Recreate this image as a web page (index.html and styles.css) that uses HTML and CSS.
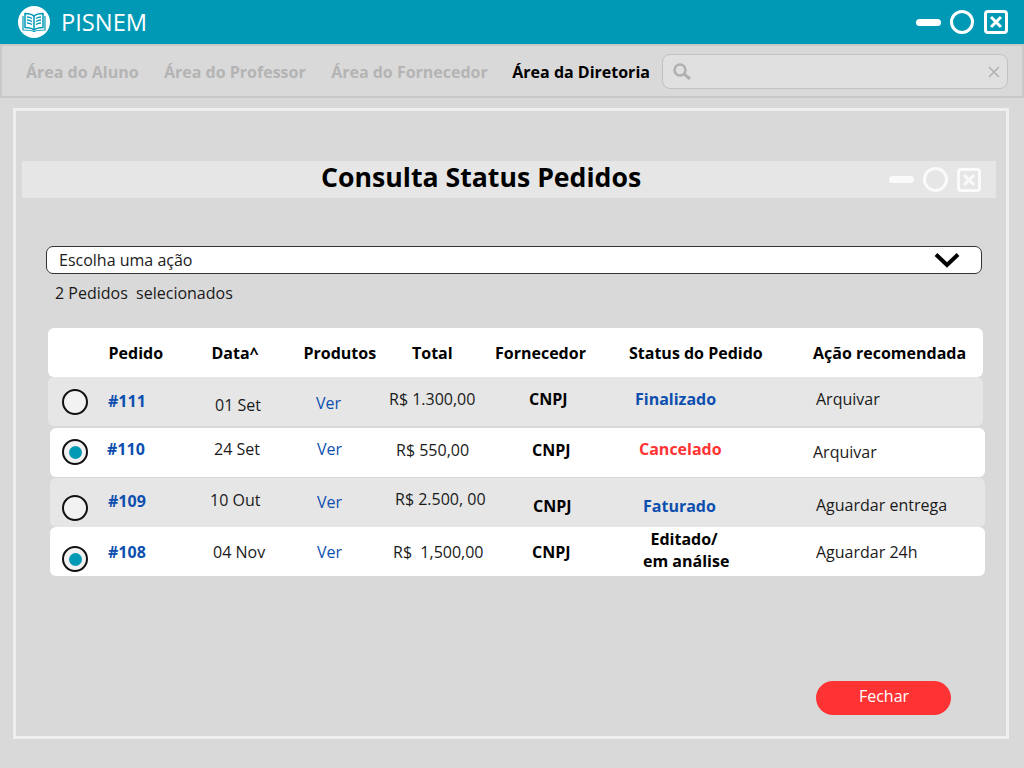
FILE: index.html
```html
<!DOCTYPE html>
<html lang="pt-BR">
<head>
    <meta charset="UTF-8">
    <meta name="viewport" content="width=device-width, initial-scale=1.0">
    <title>PISNEM - Consulta Status Pedidos</title>
    <link rel="stylesheet" href="styles.css">
</head>
<body>
    <!-- Top bar -->
    <header class="topbar">
        <span class="logo">
            <svg width="24" height="20" viewBox="0 0 24 20" fill="none" stroke="#0099b5" stroke-width="1.5">
                <path d="M12 4C9.500 2 6 1.500 3 1.500V15.500C6 15.500 9.500 16 12 18C14.500 16 18 15.500 21 15.500V1.500C18 1.500 14.500 2 12 4Z"/>
                <path d="M12 4V18"/>
                <path d="M1 4V18C5 18 9 18 12 19.500C15 18 19 18 23 18V4" stroke-width="1.200"/>
                <path d="M5 5C7 5 8.500 5.500 10 6.500M5 8C7 8 8.500 8.500 10 9.500M5 11C7 11 8.500 11.500 10 12.500M19 5C17 5 15.500 5.500 14 6.500M19 8C17 8 15.500 8.500 14 9.500M19 11C17 11 15.500 11.500 14 12.500" stroke-width="1.300"/>
            </svg>
        </span>
        <span class="brand">PISNEM</span>
        <div class="win-controls">
            <span class="win-min"></span>
            <span class="win-max"></span>
            <span class="win-close">
                <svg width="14" height="14" viewBox="0 0 14 14"><path d="M2 2L12 12M12 2L2 12" stroke="#fff" stroke-width="3"/></svg>
            </span>
        </div>
    </header>

    <!-- Nav -->
    <nav class="navbar">
        <a class="nav-link">Área do Aluno</a>
        <a class="nav-link">Área do Professor</a>
        <a class="nav-link">Área do Fornecedor</a>
        <a class="nav-link active">Área da Diretoria</a>
        <div class="search">
            <svg width="18" height="17" viewBox="0 0 18 17" fill="none" stroke="#b0b0b0">
                <circle cx="7" cy="7" r="5.500" stroke-width="2.500"/>
                <path d="M11 11L17 16" stroke-width="3"/>
            </svg>
            <svg class="search-clear" width="12" height="12" viewBox="0 0 12 12"><path d="M1 1L11 11M11 1L1 11" stroke="#b0b0b0" stroke-width="1.500"/></svg>
        </div>
    </nav>

    <!-- Consulta window -->
    <main class="panel">
        <div class="panel-title">
            <h1>Consulta Status Pedidos</h1>
            <div class="win-controls light">
                <span class="win-min"></span>
                <span class="win-max"></span>
                <span class="win-close">
                    <svg width="14" height="14" viewBox="0 0 14 14"><path d="M2 2L12 12M12 2L2 12" stroke="#fafafa" stroke-width="3"/></svg>
                </span>
            </div>
        </div>

        <div class="action-select">
            <span>Escolha uma ação</span>
            <svg width="26" height="16" viewBox="0 0 26 16" fill="none"><path d="M2 2.500L13 13L24 2.500" stroke="#000" stroke-width="4"/></svg>
        </div>
        <p class="selected-count">2 Pedidos  selecionados</p>

        <div class="orders">
            <div class="row head">
                <span></span>
                <span class="pedido">Pedido</span>
                <span class="data">Data^</span>
                <span class="produtos">Produtos</span>
                <span class="total">Total</span>
                <span class="fornecedor">Fornecedor</span>
                <span class="status">Status do Pedido</span>
                <span class="acao">Ação recomendada</span>
            </div>
            <div class="row r111 grey">
                <span class="radio"></span>
                <span class="pedido">#111</span>
                <span class="data">01 Set</span>
                <span class="produtos">Ver</span>
                <span class="total">R$ 1.300,00</span>
                <span class="fornecedor">CNPJ</span>
                <span class="status blue">Finalizado</span>
                <span class="acao">Arquivar</span>
            </div>
            <div class="row r110 shifted">
                <span class="radio on"></span>
                <span class="pedido">#110</span>
                <span class="data">24 Set</span>
                <span class="produtos">Ver</span>
                <span class="total">R$ 550,00</span>
                <span class="fornecedor">CNPJ</span>
                <span class="status red">Cancelado</span>
                <span class="acao">Arquivar</span>
            </div>
            <div class="row r109 shifted grey">
                <span class="radio"></span>
                <span class="pedido">#109</span>
                <span class="data">10 Out</span>
                <span class="produtos">Ver</span>
                <span class="total">R$ 2.500, 00</span>
                <span class="fornecedor">CNPJ</span>
                <span class="status blue">Faturado</span>
                <span class="acao">Aguardar entrega</span>
            </div>
            <div class="row r108 shifted">
                <span class="radio on"></span>
                <span class="pedido">#108</span>
                <span class="data">04 Nov</span>
                <span class="produtos">Ver</span>
                <span class="total">R$  1,500,00</span>
                <span class="fornecedor">CNPJ</span>
                <span class="status">Editado/ <br>em análise</span>
                <span class="acao">Aguardar 24h</span>
            </div>
        </div>

        <button class="btn-close" type="button">Fechar</button>
    </main>
</body>
</html>
```

FILE: styles.css
```css
* { box-sizing: border-box; }

body {
    margin: 0;
    height: 768px;
    overflow: hidden;
    background: #d9d9d9;
    color: #1a1a1a;
    font-family: "Open Sans", sans-serif;
    font-size: 16px;
    line-height: 22px;
}

/* top bar */
.topbar {
    display: flex;
    align-items: center;
    height: 44px;
    padding-left: 18px;
    background: #0099b5;
    color: #fff;
}
.logo {
    display: flex;
    align-items: center;
    justify-content: center;
    width: 32px;
    height: 32px;
    border-radius: 50%;
    background: #fff;
}
.brand {
    margin-left: 11px;
    font-size: 23.7px;
    line-height: 32px;
}
.win-controls {
    display: flex;
    align-items: center;
    margin-left: auto;
    padding-right: 16px;
}
.win-min {
    width: 25px;
    height: 7px;
    margin-right: 9px;
    border-radius: 4px;
    background: #fff;
}
.win-max {
    width: 24px;
    height: 24px;
    margin-right: 10px;
    border: 3px solid #fff;
    border-radius: 50%;
}
.win-close {
    display: flex;
    align-items: center;
    justify-content: center;
    width: 24px;
    height: 24px;
    border: 3px solid #fff;
    border-radius: 4px;
}

/* nav */
.navbar {
    display: flex;
    align-items: center;
    height: 54px;
    padding: 1px 14px 0 24px;
    border: 2px solid #c8c8c8;
    background: #d9d9d9;
}
.nav-link {
    margin-right: 25.4px;
    font-weight: 700;
    color: #b4b4b4;
}
.nav-link:nth-child(3) { margin-right: 24.5px; }
.nav-link.active {
    margin-right: 12px;
    color: #000;
}
.search {
    display: flex;
    align-items: center;
    flex: 1;
    height: 35px;
    padding: 0 7px 0 10px;
    border: 1px solid #c2c2c2;
    border-radius: 8px;
    background: #e0e0e0;
}
.search-clear { margin-left: auto; }

/* window */
.panel {
    position: relative;
    display: flex;
    flex-direction: column;
    width: 996px;
    height: 631px;
    margin: 10px 0 0 13px;
    padding: 50px 10px 0 6px;
    border: 3px solid #efefef;
}
.panel-title {
    display: flex;
    align-items: center;
    height: 37px;
    padding-left: 299px;
    background: #e6e6e6;
}
.panel-title h1 {
    margin: 0 0 5px;
    font-size: 26.67px;
    line-height: 32px;
    font-weight: 700;
    color: #000;
}
.win-controls.light {
    padding-right: 15px;
}
.light .win-max {
    width: 25px;
    height: 25px;
    margin-right: 9px;
}
.light .win-min,
.light .win-max,
.light .win-close { border-color: #fafafa; }
.light .win-min { background: #fafafa; }

.action-select {
    display: flex;
    align-items: center;
    justify-content: space-between;
    width: 936px;
    height: 28px;
    margin: 48px 0 0 24px;
    padding: 0 21px 0 12px;
    border: 1px solid #333;
    border-radius: 7px;
    background: #fff;
}
.selected-count {
    margin: 8px 0 0 33px;
    white-space: pre;
}

/* table */
.orders {
    width: 937px;
    margin: 24px 0 0 26px;
}
.row {
    display: grid;
    grid-template-columns: 58px 103px 94px 85px 106px 134px 184px 171px;
    align-items: start;
    width: 935px;
    height: 49px;
    border-radius: 6px;
    background: #fff;
    white-space: pre;
}
.row.shifted {
    grid-template-columns: 56px 103px 94px 85px 106px 134px 184px 171px;
    margin-left: 2px;
}
.row.grey { background: #e6e6e6; }
.r110 { margin-top: 2px; height: 49px; }
.r109 { margin-top: 1px; }

.head { font-weight: 700; color: #000; }
.head span { margin-top: 14px; }
.head .pedido, .head .data { margin-left: 2.5px; }
.head .produtos { margin-left: 0.5px; }
.head .fornecedor, .head .status, .head .acao { margin-left: 1px; }
.head .total { margin-left: 24px; }

.pedido { font-weight: 700; color: #0d4faf; }
.head .pedido { color: #000; }
.produtos { color: #0d4faf; }
.head .produtos { color: #000; }
.fornecedor { font-weight: 700; color: #000; }
.status { font-weight: 700; color: #000; }
.status.blue { color: #0d4faf; }
.status.red { color: #ff3333; }

.radio {
    width: 26px;
    height: 26px;
    margin-left: 14px;
    display: flex;
    align-items: center;
    justify-content: center;
    border: 2px solid #111;
    border-radius: 50%;
    background: #f2f2f2;
}
.radio.on::after {
    content: "";
    width: 13px;
    height: 13px;
    border-radius: 50%;
    background: #0099b5;
}
.shifted .radio { margin-left: 12px; }

/* the cells in the rows don't line up, each one sits a little off */
.r111 .radio { margin-top: 12px; }
.r111 .pedido { margin: 13px 0 0 2px; }
.r111 .data { margin: 17px 0 0 6px; }
.r111 .produtos { margin: 15px 0 0 13px; }
.r111 .total { margin: 11px 0 0 1px; }
.r111 .fornecedor { margin: 11px 0 0 35px; }
.r111 .status { margin: 11px 0 0 7px; }
.r111 .acao { margin: 11px 0 0 4px; }

.r110 .radio { margin-top: 11px; }
.r110 .pedido { margin: 10px 0 0 1px; }
.r110 .data { margin: 10px 0 0 5px; }
.r110 .produtos { margin: 10px 0 0 14px; }
.r110 .total { margin: 11px 0 0 8px; }
.r110 .fornecedor { margin: 11px 0 0 38px; }
.r110 .status { margin: 10px 0 0 11px; }
.r110 .acao { margin: 13px 0 0 1px; }

.r109 .radio { margin-top: 17px; }
.r109 .pedido { margin: 12px 0 0 2px; }
.r109 .data { margin: 11px 0 0 1px; }
.r109 .produtos { margin: 13px 0 0 14px; }
.r109 .total { margin: 10px 0 0 7px; }
.r109 .fornecedor { margin: 17px 0 0 39px; }
.r109 .status { margin: 17px 0 0 15px; }
.r109 .acao { margin: 16px 0 0 4px; }

.r108 .radio { margin-top: 19px; }
.r108 .pedido { margin: 14px 0 0 2px; }
.r108 .data { margin: 14px 0 0 4px; }
.r108 .produtos { margin: 14px 0 0 14px; }
.r108 .total { margin: 14px 0 0 5px; }
.r108 .fornecedor { margin: 14px 0 0 38px; }
.r108 .status { margin: 1px 0 0 15px; text-align: center; justify-self: start; }
.r108 .acao { margin: 14px 0 0 4px; }

.btn-close {
    position: absolute;
    left: 800px;
    top: 570px;
    width: 135px;
    height: 34px;
    padding: 0 0 4px 1px;
    border: none;
    border-radius: 17px;
    background: #ff3333;
    color: #fff;
    font-family: "Open Sans", sans-serif;
    font-size: 16px;
}
```
